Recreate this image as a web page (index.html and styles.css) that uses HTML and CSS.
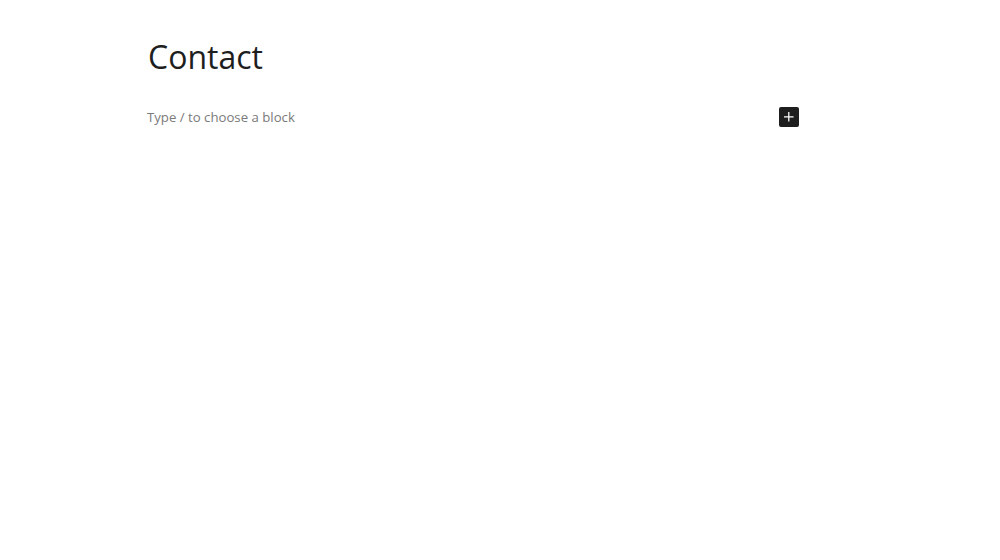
FILE: index.html
```html
<!DOCTYPE html>
<html>
<head>
<meta charset="utf-8">
<link rel="stylesheet" href="styles.css">
</head>
<body>
<div class="canvas">
  <div class="content">
    <h1 class="title">Contact</h1>
    <div class="block-row">
      <p class="placeholder">Type / to choose a block</p>
      <button class="inserter" aria-label="Add block">
        <svg width="24" height="24" viewBox="0 0 24 24"><path d="M11 12.5V17.5H12.5V12.5H17.5V11H12.5V6H11V11H6V12.5H11Z" fill="#fff"/></svg>
      </button>
    </div>
  </div>
</div>
</body>
</html>
```
FILE: styles.css
```css
html, body {
  margin: 0;
  padding: 0;
  background: #fff;
}
.canvas {
  width: 1000px;
  height: 560px;
  overflow: hidden;
  font-family: "Open Sans", "Noto Sans", sans-serif;
  color: #1e1e1e;
}
.content {
  width: 652px;
  margin-left: 147px;
  padding-top: 36px;
}
.title {
  margin: 0;
  font-size: 32px;
  font-weight: 400;
  line-height: 1.3;
  padding-left: 1px;
}
.block-row {
  display: flex;
  align-items: center;
  justify-content: space-between;
  margin-top: 29px;
}
.placeholder {
  margin: 0;
  font-size: 13.2px;
  line-height: 20px;
  color: #7a7a7a;
}
.inserter {
  width: 20px;
  height: 20px;
  padding: 0;
  border: 0;
  border-radius: 2px;
  background: #1e1e1e;
  display: flex;
  align-items: center;
  justify-content: center;
}
.inserter svg {
  width: 20px;
  height: 20px;
}
```
